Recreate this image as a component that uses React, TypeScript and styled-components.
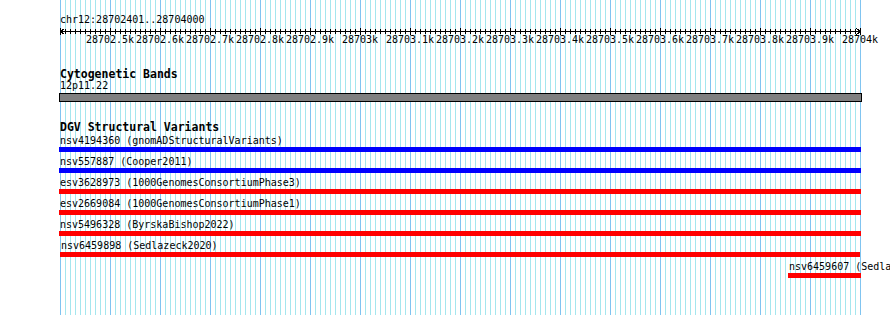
import React from 'react';
import styled, { createGlobalStyle } from 'styled-components';

const VIEW_START = 28702398;
const BP_PER_PX = 2;
const CANVAS_WIDTH = 803;

type Variant = {
	id: string;
	study: string;
	color: string;
	start: number;
	end: number;
};

const variants: Variant[] = [
	{ id: 'nsv4194360', study: 'gnomADStructuralVariants', color: '#0000ff', start: 28690000, end: 28720000 },
	{ id: 'nsv557887', study: 'Cooper2011', color: '#0000ff', start: 28650000, end: 28760000 },
	{ id: 'esv3628973', study: '1000GenomesConsortiumPhase3', color: '#ff0000', start: 28695000, end: 28710000 },
	{ id: 'esv2669084', study: '1000GenomesConsortiumPhase1', color: '#ff0000', start: 28695000, end: 28710000 },
	{ id: 'nsv5496328', study: 'ByrskaBishop2022', color: '#ff0000', start: 28695000, end: 28710000 },
	{ id: 'nsv6459898', study: 'Sedlazeck2020', color: '#ff0000', start: 28702400, end: 28704000 },
	{ id: 'nsv6459607', study: 'Sedlazeck2020', color: '#ff0000', start: 28703856, end: 28706000 },
];

const toPx = (bp: number) =>
	Math.max(0, Math.min(CANVAS_WIDTH - 1, Math.round((bp - VIEW_START) / BP_PER_PX)));

const formatTick = (bp: number) => {
	const kb = bp / 1000;
	return bp % 1000 === 0 ? `${kb}k` : `${kb.toFixed(1)}k`;
};

const Ruler = () => {
	const ticks = [];
	for (let i = 0; i <= 160; i++) {
		const x = 1.5 + i * 5;
		const major = i % 10 === 0;
		ticks.push(<line key={i} x1={x} x2={x} y1={major ? 2 : 3} y2={major ? 9 : 8} />);
	}
	const labels = [];
	for (let k = 1; k <= 16; k++) {
		labels.push(
			<text key={k} x={1 + k * 50} y={17} textAnchor="middle">
				{formatTick(28702400 + k * 100)}
			</text>
		);
	}
	return (
		<RulerSvg width={CANVAS_WIDTH} height={20}>
			<g stroke="#000" strokeWidth={1} shapeRendering="crispEdges" fill="none">
				<line x1={1} x2={802} y1={5.5} y2={5.5} />
				{ticks}
				<polyline points="5.5,2.5 1.5,5.5 5.5,8.5" />
				<polyline points="797.5,2.5 801.5,5.5 797.5,8.5" />
			</g>
			<g fill="#000">{labels}</g>
		</RulerSvg>
	);
};

const App = () => (
	<>
		<GlobalStyle />
		<Page>
			<Canvas>
				<Landmark>chr12:28702401..28704000</Landmark>
				<Ruler />
				<TrackTitle $top={22} $lineHeight={12}>
					Cytogenetic Bands
				</TrackTitle>
				<FeatureLabel $lineHeight={12}>12p11.22</FeatureLabel>
				<Band />
				<TrackTitle $top={19} $lineHeight={13}>
					DGV Structural Variants
				</TrackTitle>
				{variants.map((v) => {
					const left = toPx(v.start);
					const right = toPx(v.end);
					return (
						<VariantRow key={v.id} style={{ marginLeft: left }}>
							<FeatureLabel $lineHeight={13}>
								{v.id} ({v.study})
							</FeatureLabel>
							<VariantBar $color={v.color} style={{ width: right - left }} />
						</VariantRow>
					);
				})}
			</Canvas>
		</Page>
	</>
);

const GlobalStyle = createGlobalStyle`
	html, body {
		margin: 0;
		padding: 0;
		background: #ffffff;
		overflow: hidden;
	}
`;

const Page = styled.div`
	display: flex;
	width: 890px;
	height: 315px;
	overflow: hidden;
	background: #ffffff;
	color: #000000;
	font-family: 'DejaVu Sans Mono', 'Liberation Mono', monospace;
	font-size: 10px;
`;

const Canvas = styled.div`
	flex: none;
	display: flex;
	flex-direction: column;
	align-items: flex-start;
	margin-left: 59px;
	width: ${CANVAS_WIDTH}px;
	height: 315px;
	background-image: linear-gradient(to right, #80c4f0 0 1px, transparent 1px),
		linear-gradient(to right, #a4e6ee 0 1px, transparent 1px);
	background-size: 50px 100%, 5px 100%;
	background-position: 1px 0, 1px 0;
	background-repeat: repeat-x;
	background-clip: content-box;
`;

const Landmark = styled.div`
	margin-top: 13px;
	padding-left: 1px;
	height: 13px;
	line-height: 13px;
	white-space: nowrap;
`;

const RulerSvg = styled.svg`
	display: block;
	flex: none;
	overflow: visible;
	font-family: 'DejaVu Sans Mono', 'Liberation Mono', monospace;
	font-size: 10px;
`;

const TrackTitle = styled.div<{ $top: number; $lineHeight: number }>`
	margin-top: ${(p) => p.$top}px;
	padding-left: 1px;
	height: ${(p) => p.$lineHeight}px;
	line-height: ${(p) => p.$lineHeight}px;
	font-weight: bold;
	font-size: 11.5px;
	white-space: nowrap;
`;

const FeatureLabel = styled.div<{ $lineHeight: number }>`
	padding-left: 1px;
	height: ${(p) => p.$lineHeight}px;
	line-height: ${(p) => p.$lineHeight}px;
	white-space: nowrap;
`;

const Band = styled.div`
	box-sizing: border-box;
	margin-top: 1px;
	width: 100%;
	height: 9px;
	border: 1px solid #000000;
	background: #808080;
`;

const VariantRow = styled.div`
	display: flex;
	flex-direction: column;
	height: 21px;
	align-self: stretch;
	&:first-of-type {
		margin-top: 0;
	}
`;

const VariantBar = styled.div<{ $color: string }>`
	height: 5px;
	background: ${(p) => p.$color};
`;

export default App;
